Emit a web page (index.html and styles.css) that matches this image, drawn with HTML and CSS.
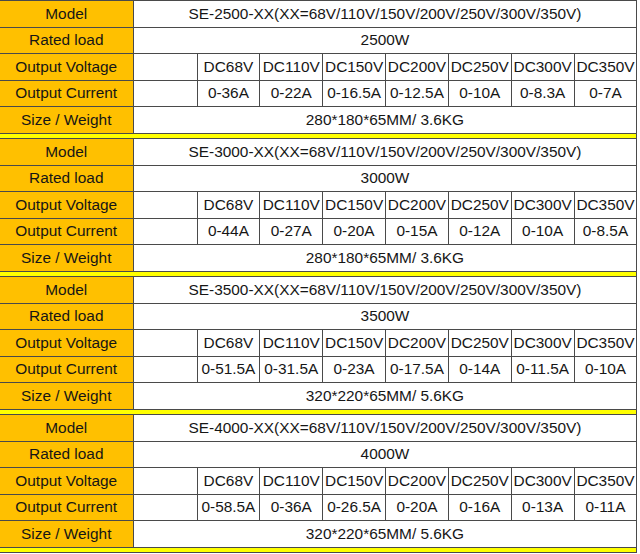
FILE: index.html
```html
<!DOCTYPE html>
<html>
<head>
<meta charset="utf-8">
<link rel="stylesheet" href="styles.css">
</head>
<body>
<table class="spec">
  <colgroup>
    <col class="c-label"><col class="c-blank">
    <col class="c-v"><col class="c-v"><col class="c-v"><col class="c-v"><col class="c-v"><col class="c-v"><col class="c-v">
  </colgroup>
  <tbody>
    <tr><td class="label">Model</td><td colspan="8">SE-2500-XX(XX=68V/110V/150V/200V/250V/300V/350V)</td></tr>
    <tr><td class="label">Rated load</td><td colspan="8">2500W</td></tr>
    <tr><td class="label">Output Voltage</td><td></td><td>DC68V</td><td>DC110V</td><td>DC150V</td><td>DC200V</td><td>DC250V</td><td>DC300V</td><td>DC350V</td></tr>
    <tr><td class="label">Output Current</td><td></td><td>0-36A</td><td>0-22A</td><td>0-16.5A</td><td>0-12.5A</td><td>0-10A</td><td>0-8.3A</td><td>0-7A</td></tr>
    <tr><td class="label">Size / Weight</td><td colspan="8">280*180*65MM/ 3.6KG</td></tr>
    <tr class="sep"><td colspan="9"></td></tr>

    <tr><td class="label">Model</td><td colspan="8">SE-3000-XX(XX=68V/110V/150V/200V/250V/300V/350V)</td></tr>
    <tr><td class="label">Rated load</td><td colspan="8">3000W</td></tr>
    <tr><td class="label">Output Voltage</td><td></td><td>DC68V</td><td>DC110V</td><td>DC150V</td><td>DC200V</td><td>DC250V</td><td>DC300V</td><td>DC350V</td></tr>
    <tr><td class="label">Output Current</td><td></td><td>0-44A</td><td>0-27A</td><td>0-20A</td><td>0-15A</td><td>0-12A</td><td>0-10A</td><td>0-8.5A</td></tr>
    <tr><td class="label">Size / Weight</td><td colspan="8">280*180*65MM/ 3.6KG</td></tr>
    <tr class="sep"><td colspan="9"></td></tr>

    <tr><td class="label">Model</td><td colspan="8">SE-3500-XX(XX=68V/110V/150V/200V/250V/300V/350V)</td></tr>
    <tr><td class="label">Rated load</td><td colspan="8">3500W</td></tr>
    <tr><td class="label">Output Voltage</td><td></td><td>DC68V</td><td>DC110V</td><td>DC150V</td><td>DC200V</td><td>DC250V</td><td>DC300V</td><td>DC350V</td></tr>
    <tr><td class="label">Output Current</td><td></td><td>0-51.5A</td><td>0-31.5A</td><td>0-23A</td><td>0-17.5A</td><td>0-14A</td><td>0-11.5A</td><td>0-10A</td></tr>
    <tr><td class="label">Size / Weight</td><td colspan="8">320*220*65MM/ 5.6KG</td></tr>
    <tr class="sep"><td colspan="9"></td></tr>

    <tr><td class="label">Model</td><td colspan="8">SE-4000-XX(XX=68V/110V/150V/200V/250V/300V/350V)</td></tr>
    <tr><td class="label">Rated load</td><td colspan="8">4000W</td></tr>
    <tr><td class="label">Output Voltage</td><td></td><td>DC68V</td><td>DC110V</td><td>DC150V</td><td>DC200V</td><td>DC250V</td><td>DC300V</td><td>DC350V</td></tr>
    <tr><td class="label">Output Current</td><td></td><td>0-58.5A</td><td>0-36A</td><td>0-26.5A</td><td>0-20A</td><td>0-16A</td><td>0-13A</td><td>0-11A</td></tr>
    <tr><td class="label">Size / Weight</td><td colspan="8">320*220*65MM/ 5.6KG</td></tr>
    <tr class="sep"><td colspan="9"></td></tr>
  </tbody>
</table>
</body>
</html>
```

FILE: styles.css
```css
html, body {
  margin: 0;
  padding: 0;
  background: #ffffff;
}

.spec {
  border-collapse: collapse;
  table-layout: fixed;
  width: 637px;
  font-family: "Liberation Sans", Arial, sans-serif;
  font-size: 15.4px;
  color: #161616;
}

.c-label { width: 133px; }
.c-blank { width: 64px; }
.c-v { width: 62.85px; }

.spec td {
  border: 1px solid #4a4a4a;
  padding: 0;
  height: 25.5px;
  text-align: center;
  vertical-align: middle;
  white-space: nowrap;
  overflow: hidden;
  line-height: 18px;
}

.spec td.label {
  background: #ffc000;
  border-left: none;
}

.spec tr.sep td {
  height: 4.5px;
  background: #ffff00;
  border-left: none;
}
```
